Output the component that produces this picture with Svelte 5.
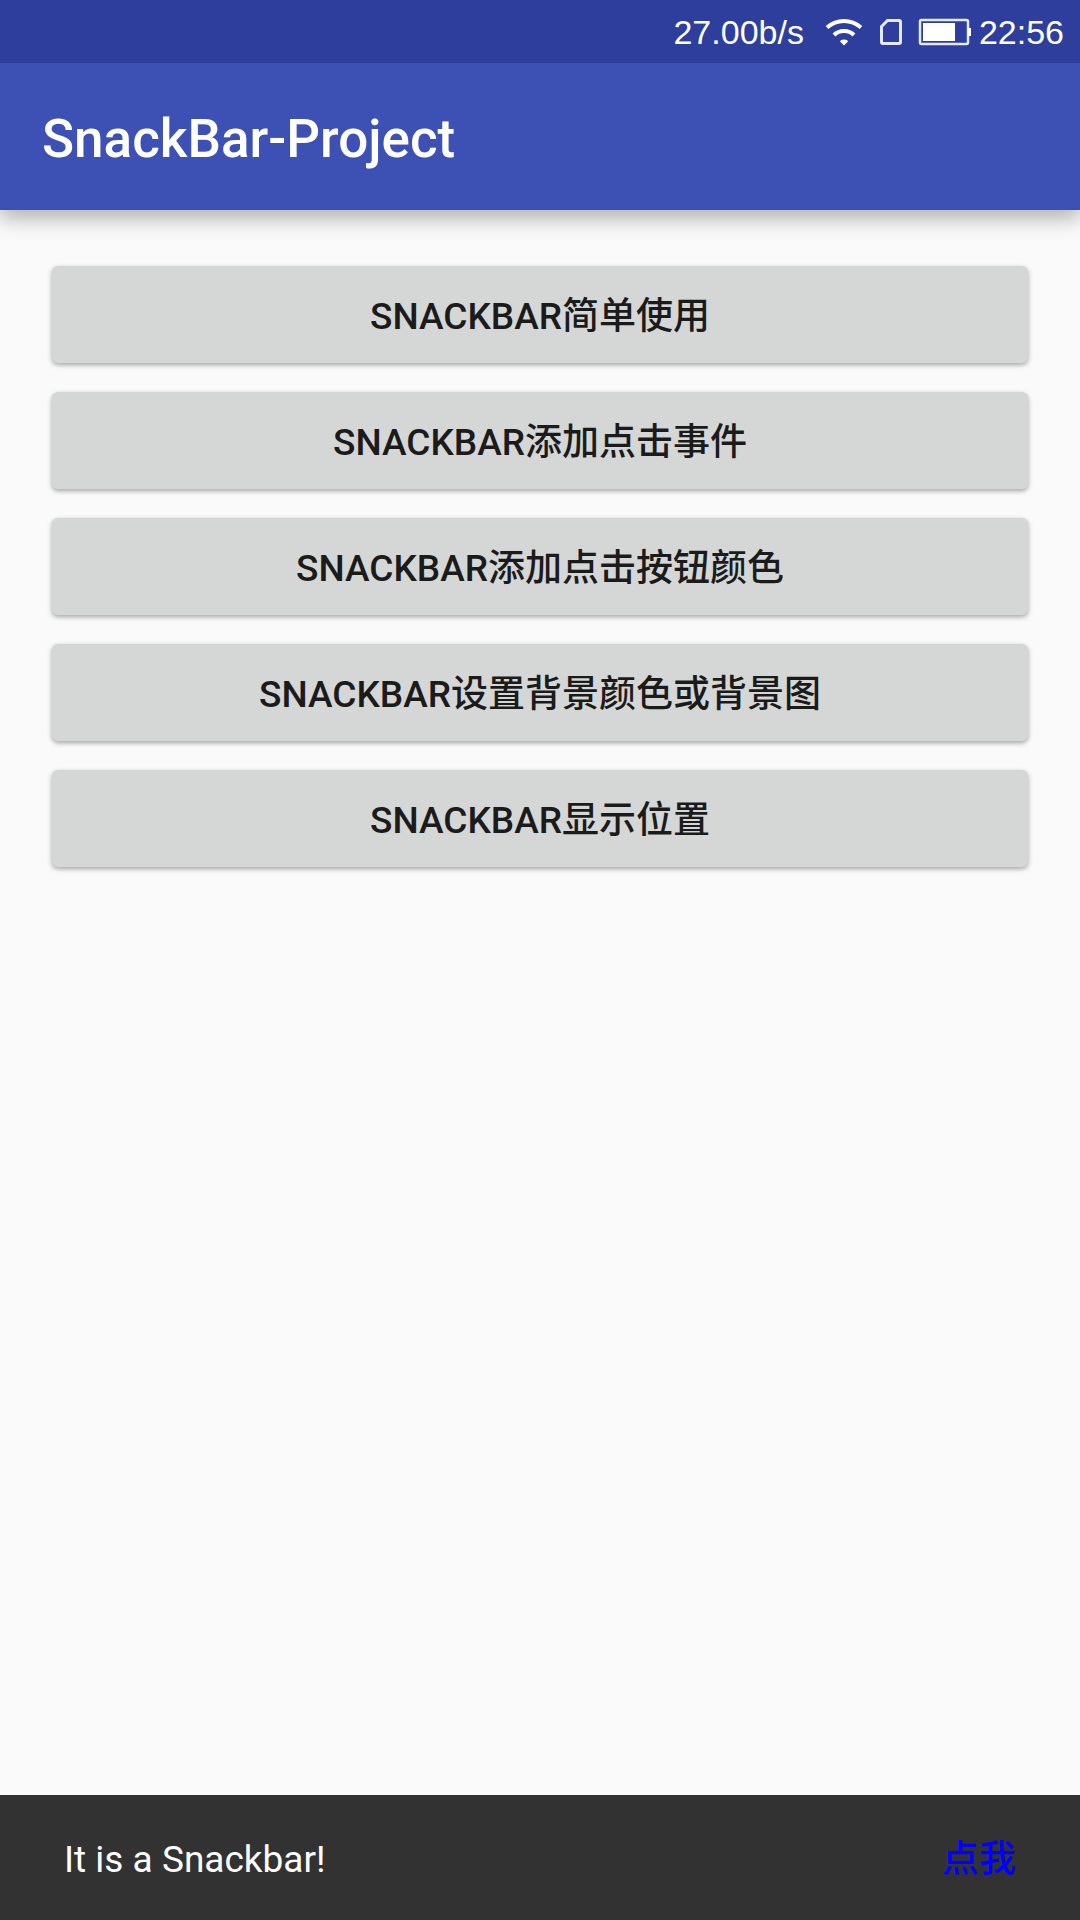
<script>
  const actions = [
    'SnackBar简单使用',
    'SnackBar添加点击事件',
    'SnackBar添加点击按钮颜色',
    'SnackBar设置背景颜色或背景图',
    'SnackBar显示位置'
  ];
</script>

<div class="screen">
  <div class="status">
    <span class="speed">27.00b/s</span>
    <svg class="wifi" width="38" height="28" viewBox="0 0 38 28" aria-hidden="true">
      <g fill="none" stroke="#fff" stroke-width="4">
        <path d="M2 9.500 Q9.500 3 19 3 Q28.500 3 36 9.500" />
        <path d="M9 17 Q13 13 19 13 Q25 13 29 17" />
      </g>
      <path d="M15 23.500 Q15.500 21.500 19 21.500 Q22.500 21.500 23 23.500 L19 27.500 Z" fill="#fff" />
    </svg>
    <svg class="sim" width="24" height="28" viewBox="0 0 24 28" aria-hidden="true">
      <path d="M8.500 2.500 H20 Q21.500 2.500 21.500 4 V24 Q21.500 25.500 20 25.500 H4 Q2.500 25.500 2.500 24 V8.500 Z" fill="none" stroke="#e4e9ff" stroke-width="3" />
    </svg>
    <svg class="battery" width="54" height="28" viewBox="0 0 54 28" aria-hidden="true">
      <rect x="2" y="2" width="48" height="24" rx="1.500" fill="none" stroke="#e4e9ff" stroke-width="2.500" />
      <rect x="5" y="5" width="32" height="18" fill="#fff" />
      <rect x="50" y="10" width="3" height="8" fill="#fff" />
    </svg>
    <time>22:56</time>
  </div>
  <header><h1>SnackBar-Project</h1></header>
  <main>
    {#each actions as label}
      <button class="action" type="button">{label}</button>
    {/each}
  </main>
  <div class="snackbar" role="status">
    <span>It is a Snackbar!</span>
    <button class="confirm" type="button">点我</button>
  </div>
</div>

<style>
  .screen {
    display: flex;
    flex-direction: column;
    min-height: 100vh;
    background: #fafafa;
    font-family: Roboto, "Noto Sans CJK SC", sans-serif;
  }
  .status {
    position: relative;
    z-index: 1;
    display: flex;
    align-items: center;
    justify-content: flex-end;
    height: 63px;
    padding-right: 16px;
    background: #2d3e9d;
    color: #fff;
    font: 34px "Liberation Sans", sans-serif;
  }
  .speed,
  time {
    padding-top: 2px;
  }
  .wifi { margin-left: 21px; }
  .sim { margin-left: 16px; }
  .battery { margin: 0 7px 0 15px; }
  header {
    display: flex;
    align-items: center;
    box-sizing: border-box;
    height: 147px;
    padding: 4px 42px 0;
    background: #3d51b4;
    color: #fff;
    box-shadow: 0 8px 20px rgba(0, 0, 0, 0.3);
  }
  h1 { margin: 0; font-size: 53px; font-weight: 500; }
  main {
    display: flex;
    flex: 1;
    flex-direction: column;
    gap: 29px;
    padding: 56px 52px;
  }
  button { font: inherit; border: 0; }
  .action {
    height: 97px;
    padding: 0 8px 4px;
    border-radius: 6px;
    background: #d5d7d6;
    box-shadow: 0 2px 5px rgba(0, 0, 0, 0.35);
    color: #1b1b1b;
    font-size: 37px;
    font-weight: 500;
    text-transform: uppercase;
  }
  .snackbar {
    display: flex;
    align-items: center;
    justify-content: space-between;
    height: 125px;
    padding: 0 64px;
    background: #323232;
    color: #fff;
    font-size: 37px;
  }
  .snackbar span { padding-top: 4px; }
  .confirm { padding: 0 0 4px; background: none; color: #00f; font-weight: 500; }
</style>
